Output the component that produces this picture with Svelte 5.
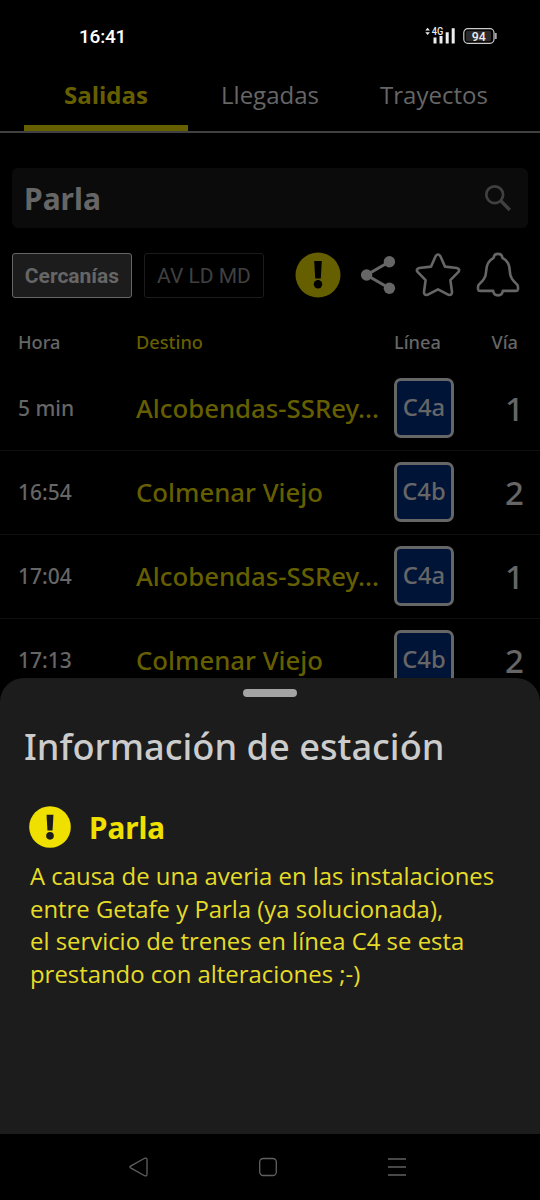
<script lang="ts">
    const tabs = ['Salidas', 'Llegadas', 'Trayectos'];
    let activeTab = 'Salidas';

    const station = 'Parla';
    const services = ['Cercanías', 'AV LD MD'];
    let service = 'Cercanías';

    const departures = [
        { time: '5 min', destination: 'Alcobendas-SSRey...', line: 'C4a', platform: 1 },
        { time: '16:54', destination: 'Colmenar Viejo', line: 'C4b', platform: 2 },
        { time: '17:04', destination: 'Alcobendas-SSRey...', line: 'C4a', platform: 1 },
        { time: '17:13', destination: 'Colmenar Viejo', line: 'C4b', platform: 2 }
    ];

    const notice = [
        'A causa de una averia en las instalaciones',
        'entre Getafe y Parla (ya solucionada),',
        'el servicio de trenes en línea C4 se esta',
        'prestando con alteraciones ;-)'
    ];
</script>

<div class="screen">
    <div class="status">
        <span class="clock">16:41</span>
        <svg class="signal" width="72" height="20" viewBox="0 0 72 20">
            <path d="M0.3 4.5L2.6 1.8L4.9 4.5ZM0.3 6.2L2.6 8.9L4.9 6.2Z" fill="#eee" />
            <text x="6.8" y="9" font-size="11" font-weight="500" fill="#eee" textLength="11.5" lengthAdjust="spacingAndGlyphs">4G</text>
            <path d="M8.5 11.5h3v6h-3zM14.5 10h3v7.5h-3zM20.7 6.3h3v11.2h-3zM26.7 2.3h3v15.2h-3z" fill="#eee" />
            <rect x="38.8" y="2.7" width="30.2" height="14.6" rx="4" fill="#000" stroke="#ccc" stroke-width="1.2" />
            <rect x="41" y="4.8" width="25" height="10.4" rx="1.5" fill="#2a2a2a" />
            <path d="M70.8 7v6" stroke="#aaa" stroke-width="1.8" />
            <text x="46.8" y="14.6" font-size="12.5" font-weight="500" fill="#eee" textLength="14" lengthAdjust="spacingAndGlyphs">94</text>
        </svg>
    </div>

    <nav class="tabs">
        {#each tabs as tab}
            <button class="tab" class:active={tab === activeTab} on:click={() => (activeTab = tab)}>{tab}</button>
        {/each}
    </nav>

    <div class="search">
        <span>{station}</span>
        <svg width="28" height="28" viewBox="0 0 28 28" fill="none" stroke="#404040">
            <circle cx="10.7" cy="10.7" r="8.4" stroke-width="2.7" />
            <path d="M16.5 16.5L25.8 26" stroke-width="3.4" />
        </svg>
    </div>

    <div class="tools">
        {#each services as item}
            <button class="service" class:selected={item === service} on:click={() => (service = item)}>{item}</button>
        {/each}
        <div class="icons">
            <svg width="46" height="46" viewBox="0 0 46 46">
                <circle cx="23" cy="23" r="22.5" fill="#665f00" />
                <path d="M19.2 9h7.6l-1 17.6h-5.6z" fill="#000" />
                <circle cx="23" cy="32.2" r="4.2" fill="#000" />
            </svg>
            <svg width="46" height="46" viewBox="0 0 46 46" fill="#666">
                <path d="M34 10L11.5 23L34 36" fill="none" stroke="#666" stroke-width="3" />
                <circle cx="34.4" cy="9.8" r="5.7" />
                <circle cx="11.6" cy="23" r="5.7" />
                <circle cx="34.4" cy="36.2" r="5.7" />
            </svg>
            <svg width="46" height="46" viewBox="0 0 46 46" fill="none" stroke="#666" stroke-width="2.6" stroke-linejoin="round">
                <path d="M20.6 4.2Q23 0.8 25.4 4.2L30 14.6L41.8 16Q45.6 17.2 43.2 20.2L35.4 28.1L37 40Q37 43.6 33.6 42.8L23 37.4L12.4 42.8Q9 43.6 9 40L10.6 28.1L2.8 20.2Q0.4 17.2 4.2 16L16 14.6Z" />
            </svg>
            <svg width="46" height="46" viewBox="0 0 46 46" fill="none" stroke="#666" stroke-width="2.6" stroke-linejoin="round">
                <path d="M18.6 5.8C19.2 0.6 26.8 0.6 27.4 5.8C33 8.6 34.6 12.5 34.8 19C35 26 38.4 29 42 32.4C43.2 33.8 43.2 35.5 42.9 37.4Q42.6 38.9 40.8 38.9H27.8C27.2 44.8 18.8 44.8 18.2 38.9H5.2Q3.4 38.9 3.1 37.4C2.8 35.5 2.8 33.8 4 32.4C7.6 29 11 26 11.2 19C11.4 12.5 13 8.6 18.6 5.8Z" />
            </svg>
        </div>
    </div>

    <div class="board">
        <div class="row head">
            <span>Hora</span>
            <span class="yellow">Destino</span>
            <span>Línea</span>
            <span class="via">Vía</span>
        </div>
        {#each departures as train}
            <div class="row">
                <span class="time">{train.time}</span>
                <span class="destination">{train.destination}</span>
                <span class="line">{train.line}</span>
                <span class="platform">{train.platform}</span>
            </div>
        {/each}
    </div>

    <section class="sheet">
        <div class="handle"></div>
        <h1>Información de estación</h1>
        <div class="station">
            <svg width="42" height="42" viewBox="0 0 46 46">
                <circle cx="23" cy="23" r="22.8" fill="#f0e000" />
                <path d="M19.2 9.5h7.6l-1 17.3h-5.6z" fill="#1c1c1c" />
                <circle cx="23" cy="32.7" r="4.2" fill="#1c1c1c" />
            </svg>
            <h2>{station}</h2>
        </div>
        <p>
            {#each notice as text}
                {text}<br />
            {/each}
        </p>
    </section>

    <div class="navbar">
        <svg width="20" height="20" viewBox="0 0 20 20">
            <path d="M1.6 9.1L15.6 1.3Q18 0.4 18 2.8V17.2Q18 19.6 15.6 18.7L1.6 10.9Q0.2 10 1.6 9.1Z" />
        </svg>
        <svg width="20" height="20" viewBox="0 0 20 20">
            <rect x="1.7" y="1.5" width="16.6" height="17" rx="3.5" />
        </svg>
        <svg width="20" height="20" viewBox="0 0 20 20">
            <path d="M1 2h18M1 10h18M1 18h18" />
        </svg>
    </div>
</div>

<style>
    :global(body) {
        background: #000;
    }

    .screen {
        width: 540px;
        height: 1200px;
        display: flex;
        flex-direction: column;
        overflow: hidden;
        background: #000;
        color: #666;
        font-family: "Open Sans", sans-serif;
    }

    button {
        margin: 0;
        padding: 0;
        border: none;
        background: none;
        color: inherit;
        font: inherit;
    }

    .status {
        display: flex;
        justify-content: space-between;
        align-items: center;
        height: 72px;
        padding: 0 43px 0 79px;
        box-sizing: border-box;
        font-family: Roboto, sans-serif;
    }

    .clock {
        color: #fff;
        font-size: 19px;
        font-weight: 500;
        letter-spacing: -0.2px;
    }

    .tabs {
        display: flex;
        height: 59px;
        padding: 0 24px;
        border-bottom: 2px solid #404040;
        flex-shrink: 0;
    }

    .tab {
        flex: 1;
        padding-bottom: 14px;
        font-size: 24px;
    }

    .tab.active {
        padding-bottom: 8px;
        color: #665f00;
        font-weight: 700;
        border-bottom: 6px solid #665f00;
    }

    .search {
        display: flex;
        justify-content: space-between;
        align-items: center;
        height: 60px;
        margin: 35px 12px 0;
        padding: 0 16px 0 12px;
        border-radius: 6px;
        background: #0b0b0b;
        font-family: "Noto Sans", sans-serif;
        font-size: 30px;
        font-weight: 700;
        flex-shrink: 0;
    }

    .tools {
        display: flex;
        gap: 12px;
        height: 46px;
        margin: 24px 19px 0 12px;
        align-items: center;
        flex-shrink: 0;
    }

    .service {
        width: 120px;
        height: 45px;
        padding-top: 2px;
        border: 1.5px solid #1b1b1b;
        border-radius: 3px;
        color: #404040;
        font-family: Roboto, sans-serif;
        font-size: 21px;
    }

    .service.selected {
        border-color: #666;
        background: #1c1c1c;
        color: #666;
        font-weight: 700;
    }

    .icons {
        display: flex;
        gap: 14px;
        margin-left: auto;
    }

    .board {
        height: 380px;
        overflow: hidden;
        flex-shrink: 0;
    }

    .row {
        display: grid;
        grid-template-columns: 118px 258px 60px 1fr;
        align-items: center;
        height: 84px;
        padding: 0 16px 1px 18px;
        box-sizing: border-box;
        border-bottom: 1px solid #101010;
        font-family: "Noto Sans", sans-serif;
        font-weight: 500;
    }

    .row.head {
        height: 69px;
        padding-bottom: 2px;
        padding-top: 21px;
        padding-right: 22px;
        border: none;
        font-size: 18.2px;
    }

    .yellow,
    .destination {
        color: #665f00;
    }

    .via,
    .platform {
        text-align: right;
    }

    .time {
        font-size: 21px;
    }

    .destination {
        white-space: nowrap;
        font-size: 25.75px;
    }

    .line {
        display: flex;
        align-items: center;
        justify-content: center;
        width: 60px;
        height: 60px;
        padding-bottom: 2px;
        box-sizing: border-box;
        border: 3px solid #666;
        border-radius: 7px;
        background: #001438;
        font-size: 23.8px;
    }

    .platform {
        padding-top: 2px;
        font-size: 33px;
        line-height: 32px;
    }

    .sheet {
        flex: 1;
        padding-left: 24px;
        border-radius: 24px 24px 0 0;
        background: #1c1c1c;
    }

    .handle {
        width: 54px;
        height: 8px;
        margin: 11px 0 0 219px;
        border-radius: 4px;
        background: #a4a4a4;
    }

    h1 {
        margin: 25px 0 0;
        color: #ccc;
        font-family: "Noto Sans", sans-serif;
        font-size: 36.2px;
        font-weight: 500;
        line-height: 49px;
    }

    .station {
        display: flex;
        align-items: center;
        gap: 18px;
        height: 42px;
        margin: 35px 0 0 5px;
    }

    h2 {
        margin: 0;
        color: #f0e000;
        font-family: "Noto Sans", sans-serif;
        font-size: 29.7px;
        font-weight: 700;
    }

    p {
        margin: 12px 0 0 6px;
        color: #e6dc28;
        font-size: 23.9px;
        line-height: 32.5px;
        white-space: nowrap;
    }

    .navbar {
        display: flex;
        gap: 109px;
        height: 66px;
        padding-left: 129px;
        align-items: center;
        flex-shrink: 0;
    }

    .navbar svg {
        fill: none;
        stroke: #606060;
        stroke-width: 1.3;
    }
</style>
